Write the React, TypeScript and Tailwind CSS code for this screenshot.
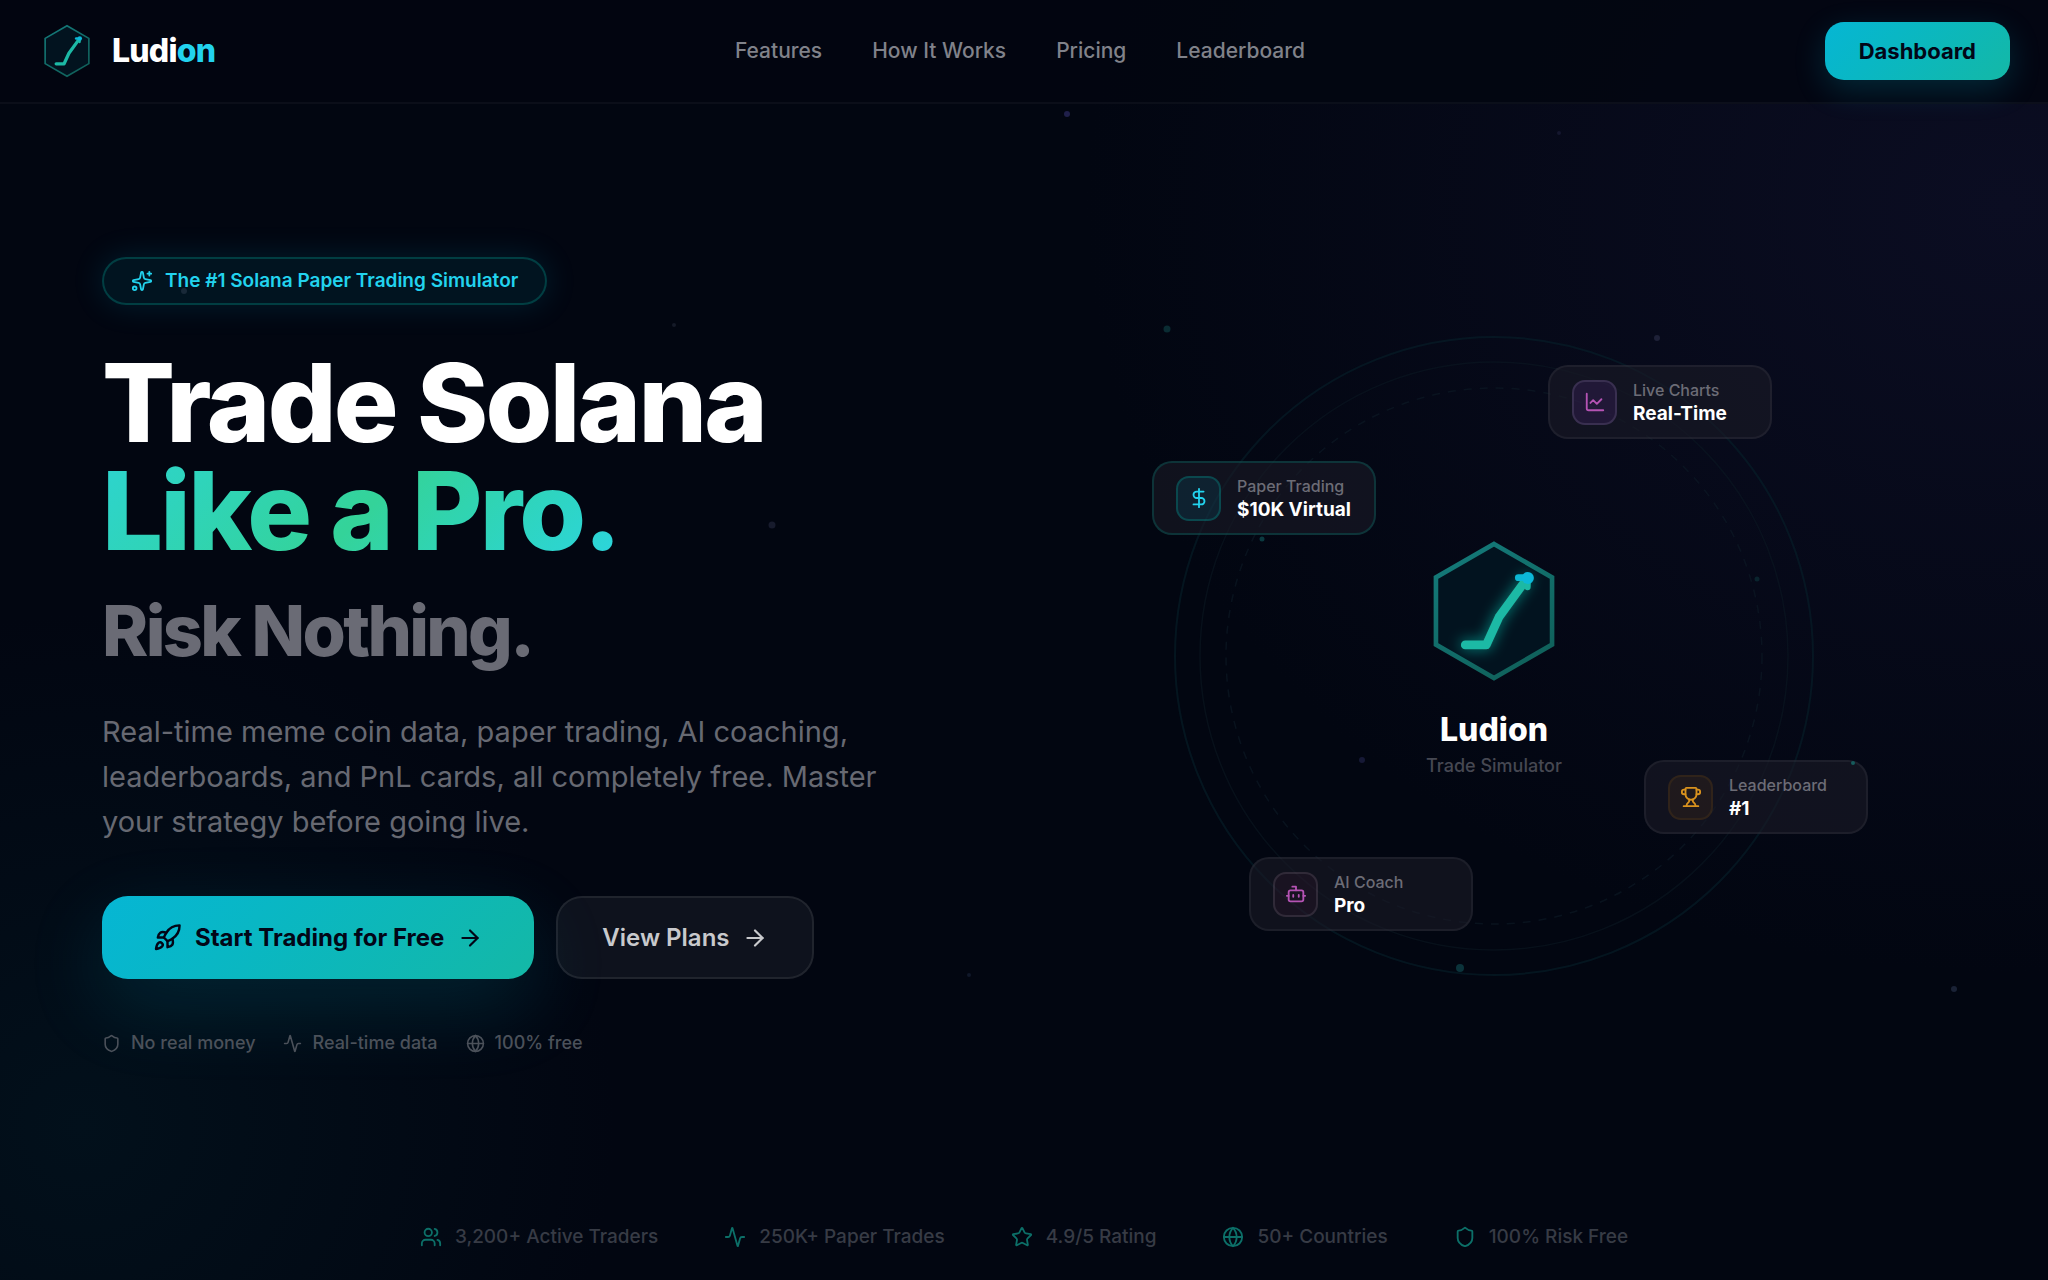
import React from "react";
import {
  Activity,
  ArrowRight,
  Bot,
  ChartLine,
  DollarSign,
  Globe,
  Rocket,
  Shield,
  Sparkles,
  Star,
  Trophy,
  Users,
} from "lucide-react";

const navLinks = [
  { label: "Features", href: "#features" },
  { label: "How It Works", href: "#how-it-works" },
  { label: "Pricing", href: "#pricing" },
  { label: "Leaderboard", href: "#leaderboard" },
];

const trust = [
  { icon: Shield, label: "No real money" },
  { icon: Activity, label: "Real-time data" },
  { icon: Globe, label: "100% free" },
];

const stats = [
  { icon: Users, label: "3,200+ Active Traders" },
  { icon: Activity, label: "250K+ Paper Trades" },
  { icon: Star, label: "4.9/5 Rating" },
  { icon: Globe, label: "50+ Countries" },
  { icon: Shield, label: "100% Risk Free" },
];

const cards = [
  {
    icon: ChartLine,
    label: "Live Charts",
    value: "Real-Time",
    place: "left-[374px] top-[29px]",
    border: "border-white/5",
    tile: "border-purple-200/12 bg-purple-500/10 text-[#b553b4]",
  },
  {
    icon: DollarSign,
    label: "Paper Trading",
    value: "$10K Virtual",
    place: "left-[-22px] top-[125px]",
    border: "border-teal-500/20",
    tile: "border-teal-500/25 bg-cyan-500/10 text-[#22d3ee]",
  },
  {
    icon: Trophy,
    label: "Leaderboard",
    value: "#1",
    place: "left-[470px] top-[424px]",
    border: "border-white/5",
    tile: "border-amber-500/8 bg-amber-500/6 text-[#d9921e]",
  },
  {
    icon: Bot,
    label: "AI Coach",
    value: "Pro",
    place: "left-[75px] top-[521px]",
    border: "border-white/5",
    tile: "border-white/10 bg-pink-500/4 text-[#b553b4]",
  },
];

// x and y are percentages of the page
const particles = [
  { x: 52.1, y: 8.9, size: 6, color: "#1f1f4a" },
  { x: 76.1, y: 10.4, size: 4, color: "#15172f" },
  { x: 32.9, y: 25.4, size: 4, color: "#151a28" },
  { x: 9, y: 22.7, size: 6, color: "#182938" },
  { x: 57, y: 25.7, size: 7, color: "#0a2c33" },
  { x: 80.9, y: 26.4, size: 6, color: "#1e2138" },
  { x: 37.7, y: 41, size: 7, color: "#171b2d" },
  { x: 61.6, y: 42.1, size: 5, color: "#0b3a40" },
  { x: 85.8, y: 45.2, size: 5, color: "#0a242e" },
  { x: 66.5, y: 59.4, size: 6, color: "#161936" },
  { x: 90.5, y: 59.6, size: 4, color: "#165b5c" },
  { x: 71.3, y: 75.6, size: 8, color: "#0b333b" },
  { x: 47.3, y: 76.2, size: 4, color: "#10182a" },
  { x: 95.4, y: 77.3, size: 6, color: "#1a2236" },
];

interface LogoProps {
  id: string;
  className: string;
  glow?: boolean;
}

const Logo: React.FC<LogoProps> = ({ id, className, glow }) => {
  return (
    <svg viewBox="0 0 100 100" fill="none" className={className} aria-hidden="true">
      <defs>
        <linearGradient id={`${id}-edge`} x1="0" y1="0" x2="0.6" y2="1">
          <stop offset="0" stopColor="#147c7c" />
          <stop offset="1" stopColor="#10625c" />
        </linearGradient>
        <filter id={`${id}-glow`} x="-50%" y="-50%" width="200%" height="200%">
          <feGaussianBlur stdDeviation="4" />
        </filter>
      </defs>
      <polygon
        points="50,6.5 87.7,28.2 87.7,71.8 50,93.5 12.3,71.8 12.3,28.2"
        fill="#02131f"
        stroke={`url(#${id}-edge)`}
        strokeWidth={glow ? 3 : 2.8}
      />
      {glow && (
        <path
          d="M31.3 72H45L53.3 53.8L71 29.5"
          stroke="#14b8a6"
          strokeWidth="7"
          strokeOpacity="0.6"
          strokeLinecap="round"
          strokeLinejoin="round"
          filter={`url(#${id}-glow)`}
        />
      )}
      <g stroke="#1cb9a5" strokeWidth="5.6" strokeLinecap="round" strokeLinejoin="round">
        <path d="M31.3 72H45L53.3 53.8L71 29.5" />
        <path d="M72 29L71.8 34.5" strokeWidth="4" />
      </g>
      <path d="M65.8 28.4H72" stroke="#0cb8d4" strokeWidth="4.4" strokeLinecap="round" />
      <circle cx="72" cy="28.5" r="3.9" fill="#0cb8d8" />
    </svg>
  );
};

const Header = () => {
  return (
    <header className="relative z-20 flex h-[104px] items-center justify-between border-b-2 border-white/4 bg-[#020611]/85 px-[38px]">
      <a href="#" className="flex items-center gap-4">
        <Logo id="brand" className="size-[58px]" />
        <span className="text-[32px] leading-10 font-extrabold tracking-tight text-white">
          Ludi<span className="text-[#22d3ee]">on</span>
        </span>
      </a>
      <nav className="flex items-center gap-[50px]">
        {navLinks.map((link) => (
          <a key={link.label} href={link.href} className="text-[21px] leading-7 font-medium text-[#80828a]">
            {link.label}
          </a>
        ))}
      </nav>
      <button className="h-[58px] rounded-[19px] bg-linear-135 from-[#06b6d4] to-[#14b8a6] px-[34px] text-[22px] font-bold text-[#020617] shadow-[0_10px_32px_rgba(6,182,212,0.2)]">
        Dashboard
      </button>
    </header>
  );
};

const HeroText = () => {
  return (
    <div>
      <div className="flex h-12 w-fit items-center gap-3 rounded-full border-2 border-teal-500/25 bg-cyan-500/8 px-[27px] text-[#22d3ee] shadow-[0_0_32px_rgba(6,182,212,0.15)]">
        <Sparkles className="size-[22px]" />
        <span className="text-[19px] leading-6 font-semibold">The #1 Solana Paper Trading Simulator</span>
      </div>
      <h1 className="mt-11 text-[108px] leading-[108px] font-extrabold tracking-tight">
        <span className="block text-white">Trade Solana</span>
        <span className="block w-fit bg-linear-135 from-[#2dd4cf] via-[#34d399] to-[#2cd5e0] bg-clip-text pr-2 text-transparent">
          Like a Pro.
        </span>
        <span className="mt-[26px] block text-[70px] leading-20 text-[#6a6b75]">Risk Nothing.</span>
      </h1>
      <p className="mt-[38px] max-w-[800px] text-[29px] leading-[45px] text-[#676972]">
        Real-time meme coin data, paper trading, AI coaching, leaderboards, and PnL cards, all completely free. Master
        your strategy before going live.
      </p>
      <div className="mt-[52px] flex items-center gap-[22px]">
        <button className="flex h-[83px] items-center gap-[13px] rounded-[26px] bg-linear-135 from-[#06b6d4] to-[#14b8a6] px-[51px] text-[24px] font-bold text-[#020617] shadow-[0_26px_80px_rgba(6,182,212,0.16)]">
          <Rocket className="size-[29px]" />
          Start Trading for Free
          <ArrowRight className="size-[26px]" />
        </button>
        <button className="flex h-[83px] items-center gap-3 rounded-[26px] border-2 border-white/8 bg-white/5 px-11 text-[24px] font-semibold text-[#c8c9cc]">
          View Plans
          <ArrowRight className="size-[26px]" />
        </button>
      </div>
      <ul className="mt-[52px] flex items-center gap-7 text-[18px] leading-6 font-medium text-[#4b515a]">
        {trust.map(({ icon: Icon, label }) => (
          <li key={label} className="flex items-center gap-[10px]">
            <Icon className="size-[19px]" />
            {label}
          </li>
        ))}
      </ul>
    </div>
  );
};

const Orbit = () => {
  return (
    <div className="relative mx-auto flex size-[640px] items-center justify-center">
      <svg viewBox="0 0 640 640" fill="none" className="absolute inset-0" aria-hidden="true">
        <circle cx="320" cy="320" r="319" stroke="#06202a" strokeOpacity="0.6" strokeWidth="2" />
        <circle cx="320" cy="320" r="294" stroke="#0c1924" strokeOpacity="0.5" strokeWidth="1.5" />
        <circle cx="320" cy="320" r="268" stroke="#0d1a26" strokeOpacity="0.6" strokeWidth="1.5" strokeDasharray="8 8" />
      </svg>
      <div className="flex flex-col items-center">
        <Logo id="hero" className="size-[154px]" glow />
        <p className="mt-[22px] text-[32px] leading-10 font-extrabold text-white">Ludion</p>
        <p className="mt-1 text-[18px] leading-6 font-medium text-[#464852]">Trade Simulator</p>
      </div>
      {cards.map(({ icon: Icon, label, value, place, border, tile }) => (
        <div
          key={label}
          className={`absolute flex h-[74px] w-[224px] items-center gap-4 rounded-[20px] border-2 bg-[#1b1a26]/60 pl-[22px] ${border} ${place}`}
        >
          <div className={`flex size-[45px] items-center justify-center rounded-[13px] border-2 ${tile}`}>
            <Icon className="size-[22px]" />
          </div>
          <div className="leading-[23px]">
            <p className="text-[16px] font-medium text-[#6c6c76]">{label}</p>
            <p className="text-[19px] font-bold text-white">{value}</p>
          </div>
        </div>
      ))}
    </div>
  );
};

const App = () => {
  return (
    <div className="relative flex min-h-screen flex-col overflow-hidden bg-[#020611] font-[Inter,sans-serif]">
      <div className="absolute inset-0 bg-[radial-gradient(ellipse_45%_60%_at_98%_16%,#0b0d22_0%,transparent_100%),radial-gradient(ellipse_26%_40%_at_4%_88%,#02101b_0%,transparent_100%)]" />
      {particles.map((p) => (
        <span
          key={`${p.x}-${p.y}`}
          className="absolute z-10 -translate-x-1/2 -translate-y-1/2 rounded-full"
          style={{ left: `${p.x}%`, top: `${p.y}%`, width: p.size, height: p.size, background: p.color }}
        />
      ))}
      <Header />
      <main className="relative grid flex-1 grid-cols-2 items-center gap-9 px-[102px]">
        <HeroText />
        <Orbit />
      </main>
      <footer className="relative pt-4 pb-[30px]">
        <ul className="flex items-center justify-center gap-[66px] text-[19px] leading-[26px] font-medium text-[#373b45]">
          {stats.map(({ icon: Icon, label }) => (
            <li key={label} className="flex items-center gap-[13px]">
              <Icon className="size-[22px] text-[#0c6f68]" />
              {label}
            </li>
          ))}
        </ul>
      </footer>
    </div>
  );
};

export default App;
